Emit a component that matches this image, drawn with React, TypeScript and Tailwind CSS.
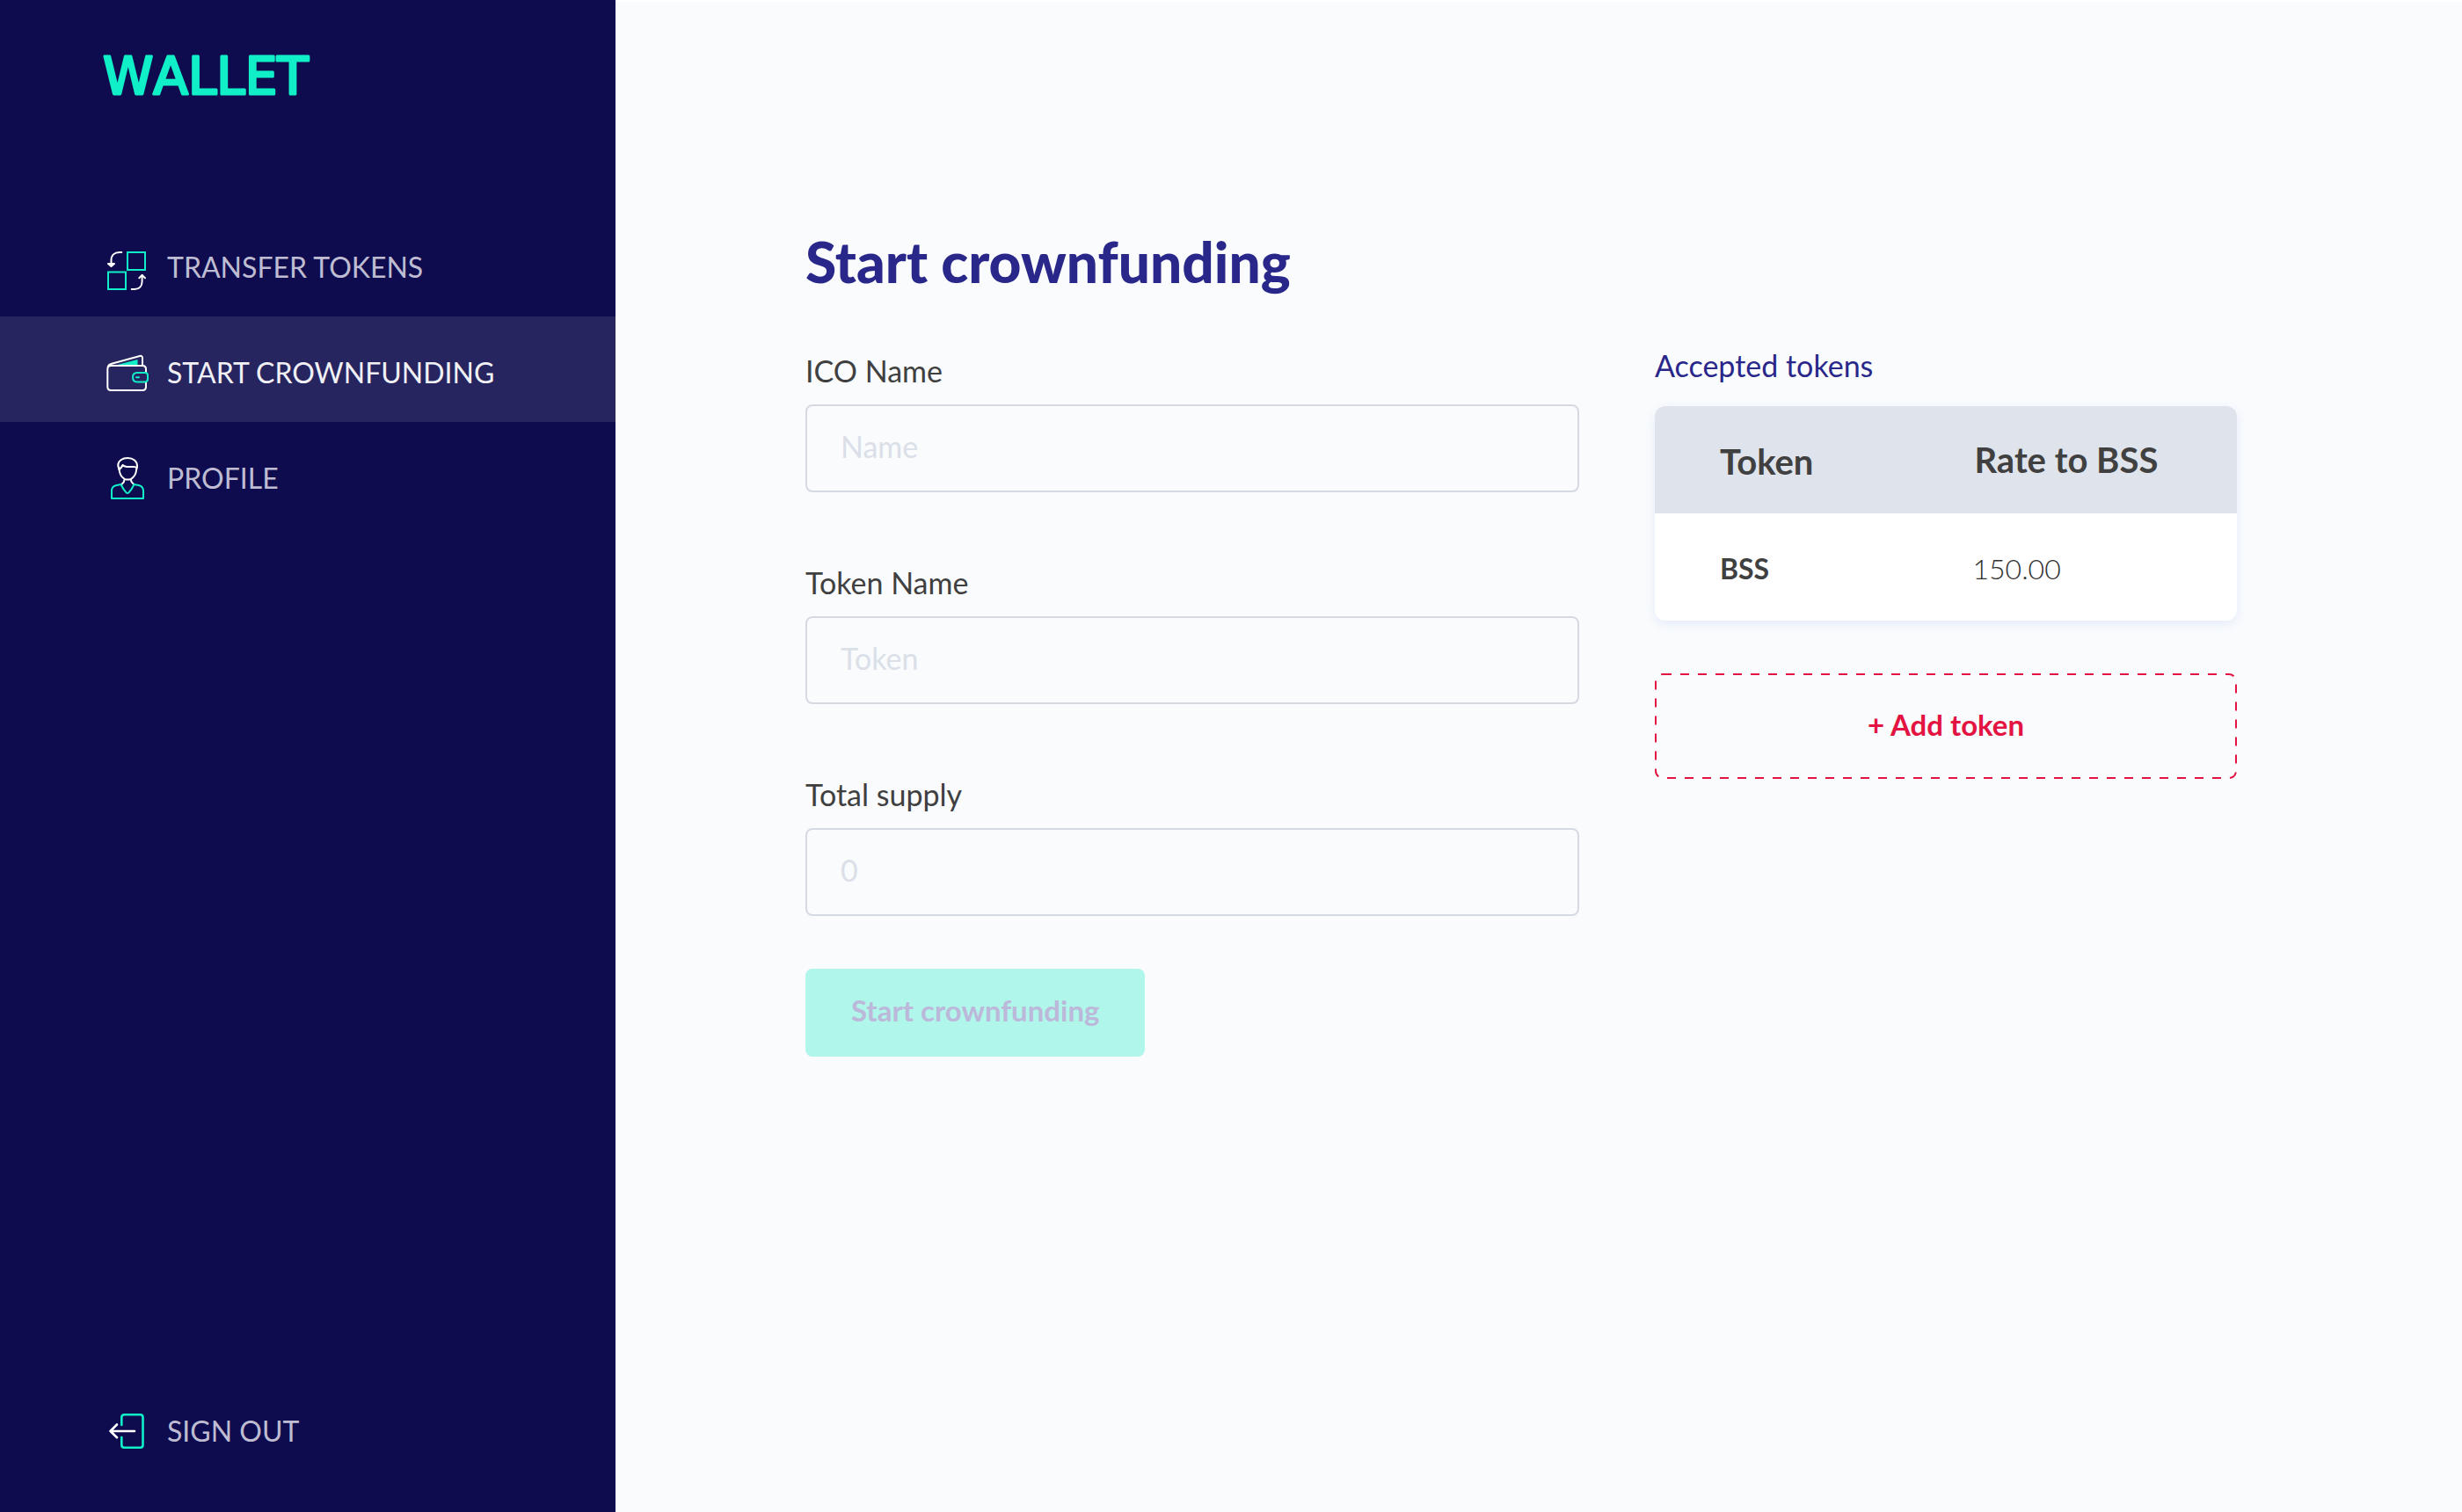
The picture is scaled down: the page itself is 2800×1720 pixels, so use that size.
import type { ReactNode } from 'react';

function IconFrame({ children }: { children: ReactNode }) {
  return (
    <svg
      viewBox="0 0 52 52"
      className="size-13 shrink-0"
      fill="none"
      strokeWidth={2}
      strokeLinecap="round"
      strokeLinejoin="round"
      aria-hidden="true"
    >
      {children}
    </svg>
  );
}

function TransferIcon() {
  return (
    <IconFrame>
      <g stroke="#10efc8" strokeLinejoin="miter">
        <rect x="25" y="9" width="20" height="20" />
        <rect x="3" y="31.5" width="20" height="19.5" />
      </g>
      <g stroke="#ffffff">
        <path d="M18.3 9H16C10 9 6.5 12.500 6.500 18V24.500" />
        <path d="M3 22L6.500 25L10 22Z" fill="#ffffff" />
        <path d="M29.700 51H33C38.500 51 41.600 47.500 41.600 42V35" />
        <path d="M38.300 38.200L41.600 35L45 38.200" />
      </g>
    </IconFrame>
  );
}

function WalletIcon() {
  return (
    <IconFrame>
      <path d="M11.500 17.500L36.500 11V17.500Z" fill="#10efc8" />
      <g stroke="#ffffff">
        <path d="M46 25.500V22Q46 18 42 18H6.300Q2.300 18 2.300 22V42Q2.300 46 6.300 46H42Q46 46 46 42V37" />
        <path d="M2.800 19Q3.500 16.700 7 15.700L39 7Q42 6.200 42 9.500V17.500" />
      </g>
      <g stroke="#10efc8">
        <path d="M36 26H45Q48 26 48 29V33Q48 36.400 45 36.400H36Q31 36.400 31 31.200Q31 26 36 26Z" />
        <path d="M35 31.200H38" />
      </g>
    </IconFrame>
  );
}

function ProfileIcon() {
  return (
    <IconFrame>
      <g stroke="#ffffff">
        <path d="M15.500 15.500C13.500 11.500 14.500 7.500 17.500 5.200C20 3.300 22.500 3 25.300 3C31.500 3 36 6.800 36 12C36 13.500 35.800 14.500 35.200 16" />
        <path d="M15.300 15.800Q17.800 15 19.500 11Q21 12.700 24 12.900H32Q34.500 13 35.600 14" />
        <path d="M15.500 15.500C15.800 20.500 18.500 25 21.500 26.800Q25.200 28.400 29 26.800C32.500 24.800 34.800 20.500 35.200 16" />
        <path d="M21.400 28Q21.200 31 18.700 32.600M29 28Q29.200 31 32 32.600" />
      </g>
      <path
        d="M17.500 33L11.700 34.300Q7 35.600 7 40.500V49H43V40.500Q43 35.800 38.500 34.300L32.500 33Q29.500 39.500 26.300 42.500Q25 43.500 23.700 42.500Q20.500 39.500 17.500 33Z"
        stroke="#10efc8"
      />
    </IconFrame>
  );
}

function SignOutIcon() {
  return (
    <IconFrame>
      <path
        d="M18.300 19V10.300Q18.300 7.300 21.300 7.300H39.500Q42.500 7.300 42.500 10.300V41.700Q42.500 44.700 39.500 44.700H21.300Q18.300 44.700 18.300 41.700V33"
        stroke="#10efc8"
        strokeWidth={2.6}
      />
      <path d="M33 26H5.500M13 18.500L5.500 26L13 33.300" stroke="#ffffff" strokeWidth={2.6} />
    </IconFrame>
  );
}

function NavItem({ icon, label, active = false }: { icon: ReactNode; label: string; active?: boolean }) {
  return (
    <a
      href="#"
      aria-current={active ? 'page' : undefined}
      className={
        active
          ? 'flex h-30 items-center gap-4.5 bg-[#27255f] pt-2 pl-30 text-[#f0f0f5]'
          : 'flex h-30 items-center gap-4.5 pt-2 pl-30 text-[#bebcd2]'
      }
    >
      {icon}
      <span className="whitespace-nowrap">{label}</span>
    </a>
  );
}

function Field({ id, label, placeholder }: { id: string; label: string; placeholder: string }) {
  return (
    <div className="flex flex-col gap-4.5">
      <label htmlFor={id}>{label}</label>
      <input
        id={id}
        type="text"
        placeholder={placeholder}
        className="h-25 w-full rounded-lg border-2 border-[#d5dae2] bg-transparent px-9.5 pb-1.5 placeholder:text-[#dbdfe8]"
      />
    </div>
  );
}

export default function App() {
  return (
    <div className="flex min-h-screen bg-[#f9fbfd] font-['Lato',sans-serif] text-[32px] leading-10 text-[#404040]">
      <aside className="flex w-1/4 shrink-0 flex-col justify-between bg-[#0e0c4e] pb-9">
        <div>
          <a href="#" className="flex h-60 items-start pt-13 pl-28" aria-label="Wallet">
            <svg className="h-18 w-72" viewBox="0 0 288 72">
              <text
                x="5"
                y="55"
                fontSize="58"
                fill="#10efc8"
                stroke="#10efc8"
                strokeWidth="3"
                strokeLinejoin="round"
                className="font-['DejaVu_Sans',sans-serif] [font-kerning:none]"
              >
                WALLET
              </text>
            </svg>
          </a>
          <nav>
            <NavItem icon={<TransferIcon />} label="TRANSFER TOKENS" />
            <NavItem icon={<WalletIcon />} label="START CROWNFUNDING" active />
            <NavItem icon={<ProfileIcon />} label="PROFILE" />
          </nav>
        </div>
        <NavItem icon={<SignOutIcon />} label="SIGN OUT" />
      </aside>

      <main className="flex-1 border-t-2 border-white pt-65 pr-64 pl-54">
        <h1 className="text-[64px] leading-18 font-black text-[#29278a]">Start crownfunding</h1>
        <div className="mt-15 flex items-start gap-[86px] text-[34px]">
          <form className="flex flex-[880_1_0%] flex-col pt-2">
            <div className="flex flex-col gap-[83px]">
              <Field id="ico-name" label="ICO Name" placeholder="Name" />
              <Field id="token-name" label="Token Name" placeholder="Token" />
              <Field id="total-supply" label="Total supply" placeholder="0" />
            </div>
            <button
              type="submit"
              disabled
              className="mt-15 h-25 self-start rounded-lg bg-[#b1f6ea] px-13 pb-1.5 text-[33px] font-bold text-[#bcb8d9]"
            >
              Start crownfunding
            </button>
          </form>

          <section className="flex-[662_1_0%] pt-0.5">
            <h2 className="text-[#29278a]">Accepted tokens</h2>
            <div className="mt-6.5 overflow-hidden rounded-xl bg-white shadow-[0_4px_12px_#e6ebfa]">
              <table className="w-full table-fixed text-left text-[32px]">
                <thead className="bg-[#dfe3eb]">
                  <tr className="h-[122px] text-[40px]">
                    <th scope="col" className="w-[54%] pt-1 pl-18.5 font-bold">Token</th>
                    <th scope="col" className="pl-1.5 font-bold">Rate to BSS</th>
                  </tr>
                </thead>
                <tbody>
                  <tr className="h-[122px]">
                    <td className="pt-1 pl-18.5 font-bold">BSS</td>
                    <td className="pt-1 pl-1 font-light text-[#303030]">150.00</td>
                  </tr>
                </tbody>
              </table>
            </div>
            <button type="button" className="relative mt-15 h-30 w-full pb-1 text-[33px] font-bold text-[#e31442]">
              <svg className="absolute inset-0 size-full" aria-hidden="true">
                <rect
                  x="1"
                  y="1"
                  rx="8"
                  className="h-[calc(100%-2px)] w-[calc(100%-2px)]"
                  fill="none"
                  stroke="#e31442"
                  strokeWidth="2"
                  strokeDasharray="10 10"
                />
              </svg>
              + Add token
            </button>
          </section>
        </div>
      </main>
    </div>
  );
}
